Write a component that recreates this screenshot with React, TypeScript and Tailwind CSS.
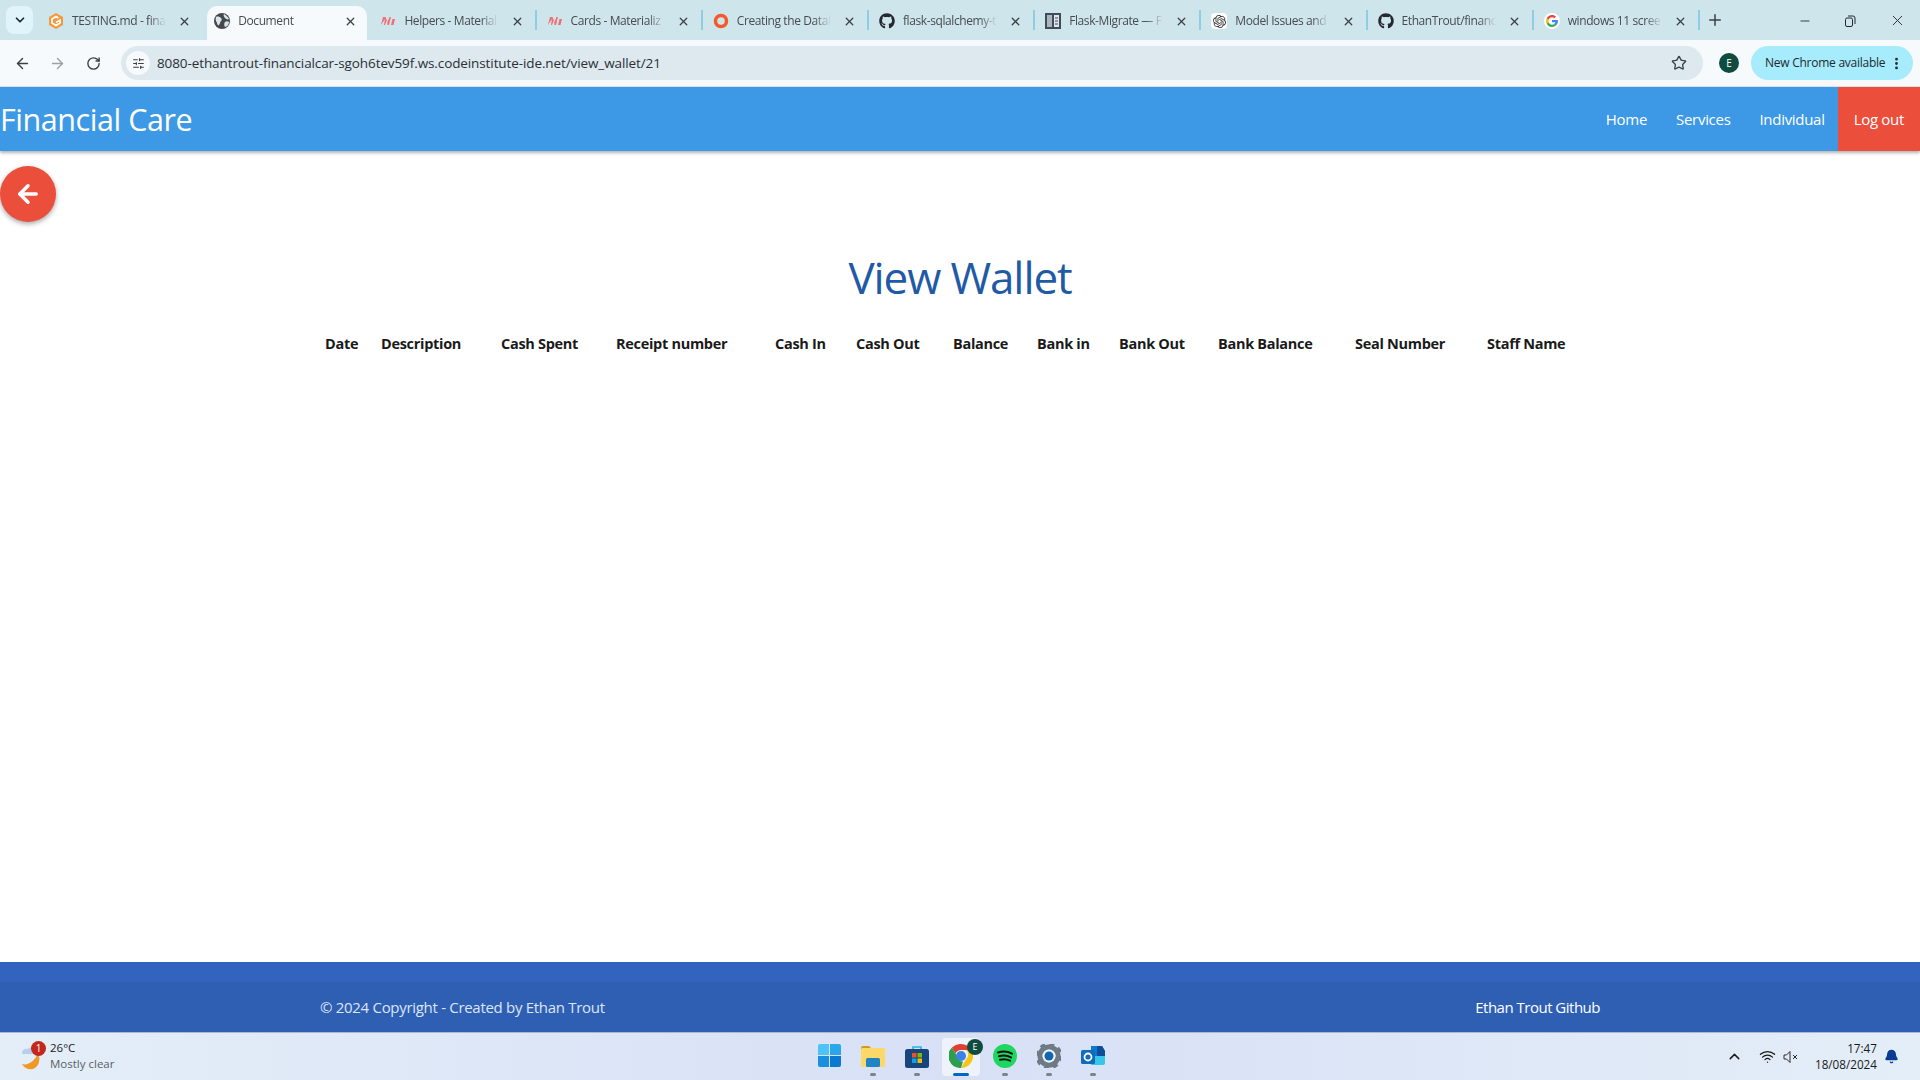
import React from 'react';
import { ArrowLeft, ArrowRight, ChevronDown, Minus, Plus, RotateCw, Star, X, ChevronUp, Wifi, Bell, EllipsisVertical, SlidersHorizontal } from 'lucide-react';
import { FaGithub } from 'react-icons/fa';
import { SiOpenai } from 'react-icons/si';

const Globe = () => (
  <svg width="16" height="16" viewBox="0 0 16 16">
    <circle cx="8" cy="8" r="8" fill="#45494d" />
    <path d="M2 4c2-1 4 0 5 1s1 2 0 3-1 3-2 4-2-1-2-2-2-2-1-6zM10 1c2 1 4 3 5 5-1 1-3 0-4-1s-2-3-1-4zM11 9c1-1 3-1 4 0 0 2-2 5-4 5-1-1-1-4 0-5z" fill="#dbe6ec" />
  </svg>
);
const Gitpod = () => (
  <svg width="16" height="18" viewBox="0 0 16 18">
    <path d="M8 1 15 5v8l-7 4-7-4V5z" fill="#f59a3c" />
    <path d="M10.500 6 8 4.600 4 6.900v4.200L8 13.400l4-2.300V8.200L8 10.400" fill="none" stroke="#fff" strokeWidth="1.700" />
  </svg>
);
const Materialize = () => (
  <svg width="16" height="16" viewBox="0 0 16 16">
    <path d="M1 12 3 4h2.500l2 5 2-5H11l-2 8H7.500L7 7l-2 5H4l1-6zM11 12l1.500-6H15l-1.500 6z" fill="#ee6e73" />
  </svg>
);
const Ring = () => (
  <svg width="16" height="16" viewBox="0 0 16 16">
    <circle cx="8" cy="8" r="5.500" fill="none" stroke="#f4592c" strokeWidth="3.500" />
  </svg>
);
const Book = () => (
  <svg width="16" height="16" viewBox="0 0 16 16">
    <rect width="16" height="16" fill="#3f4d58" />
    <rect x="2" y="2" width="5" height="12" fill="#a9b6bf" />
    <rect x="9" y="2" width="5" height="12" fill="#dfe6ea" />
    <path d="M10 5h3M10 8h3M10 11h3" stroke="#3f4d58" strokeWidth="1.200" />
  </svg>
);
const GoogleG = () => (
  <svg width="16" height="16" viewBox="0 0 48 48">
    <circle cx="24" cy="24" r="24" fill="#fff" />
    <path fill="#EA4335" d="M24 13c3 0 5.300 1.200 7 2.800l5-5C33 7.900 28.900 6 24 6 17 6 11 10 8.100 15.900l5.800 4.500C15.300 16.100 19.300 13 24 13z" />
    <path fill="#4285F4" d="M41.600 24.400c0-1.300-.1-2.300-.3-3.400H24v6.800h10c-.4 2.300-1.800 4.200-3.800 5.500l5.600 4.400c3.500-3.200 5.800-7.900 5.800-13.300z" />
    <path fill="#FBBC05" d="M13.900 27.600c-.4-1.100-.6-2.300-.6-3.600s.2-2.500.6-3.600l-5.800-4.500C6.800 18.400 6 21.100 6 24s.8 5.600 2.100 8.100z" />
    <path fill="#34A853" d="M24 42c4.900 0 8.900-1.600 11.800-4.300l-5.600-4.400c-1.600 1-3.600 1.700-6.200 1.700-4.700 0-8.700-3.100-10.100-7.400l-5.800 4.500C11 37.900 17 42 24 42z" />
  </svg>
);

const tabs = [
  { title: 'TESTING.md - fina', icon: <Gitpod /> },
  { title: 'Document', icon: <Globe />, active: true },
  { title: 'Helpers - Material', icon: <Materialize /> },
  { title: 'Cards - Materializ', icon: <Materialize /> },
  { title: 'Creating the Datal', icon: <Ring /> },
  { title: 'flask-sqlalchemy-t', icon: <FaGithub size={16} color="#24292f" /> },
  { title: 'Flask-Migrate — F', icon: <Book /> },
  { title: 'Model Issues and', icon: <span className="flex h-4 w-4 items-center justify-center rounded-sm bg-white"><SiOpenai size={13} color="#333" /></span> },
  { title: 'EthanTrout/financ', icon: <FaGithub size={16} color="#24292f" /> },
  { title: 'windows 11 scree', icon: <GoogleG /> },
];

const columns = [
  { name: 'Date', width: 'w-[56px]' },
  { name: 'Description', width: 'w-[120px]' },
  { name: 'Cash Spent', width: 'w-[115px]' },
  { name: 'Receipt number', width: 'w-[159px]' },
  { name: 'Cash In', width: 'w-[81px]' },
  { name: 'Cash Out', width: 'w-[97px]' },
  { name: 'Balance', width: 'w-[84px]' },
  { name: 'Bank in', width: 'w-[82px]' },
  { name: 'Bank Out', width: 'w-[99px]' },
  { name: 'Bank Balance', width: 'w-[137px]' },
  { name: 'Seal Number', width: 'w-[132px]' },
  { name: 'Staff Name', width: 'w-[118px]' },
];

const BrowserTab = ({ title, icon, active, hideSep }: { title: string; icon: React.ReactNode; active?: boolean; hideSep?: boolean }) => (
  <div className="relative flex h-[34px] w-[166.2px] shrink-0 items-center pb-[4px] pl-[11px] pr-[12px]">
    {active && <span className="absolute inset-y-0 left-[4px] right-[2px] rounded-t-[10px] bg-[#f6fafc]" />}
    <span className="relative flex w-[16px] shrink-0 items-center justify-center">{icon}</span>
    <span className="relative ml-[8px] w-[94px] overflow-hidden whitespace-nowrap text-[12px] tracking-[-0.4px] text-[#474c50] [mask-image:linear-gradient(90deg,#000_82%,transparent)]">{title}</span>
    <X size={13} strokeWidth={2.4} className="relative ml-auto text-[#3a4145]" />
    {!hideSep && <span className="absolute -right-px top-[4px] h-[20px] w-[2px] bg-[#8fcde3]" />}
  </div>
);

const TaskIcon = ({ children, dot }: { children: React.ReactNode; dot?: boolean }) => (
  <div className="relative mx-[3px] flex h-[38px] w-[38px] items-center justify-center pb-[2px]">
    {children}
    {dot && <span className="absolute bottom-0 h-[3px] w-[6px] rounded-full bg-[#7b828c]" />}
  </div>
);

const Taskbar = () => (
  <div className="flex h-[48px] items-center border-t border-[#a9b9d0] bg-gradient-to-r from-[#e4eef8] via-[#d8e0f6] to-[#e3eef8]">
    <div className="flex w-[829px] shrink-0 items-center pl-[18px]">
      <div className="relative h-[30px] w-[28px]">
        <svg width="26" height="30" viewBox="0 0 26 30" className="mt-[1px]">
          <path d="M4 10c0-3 3-5 6-4 2-2 6-2 8 1v4H4z" fill="#b9cfee" />
          <path d="M20 10c3 6 1 14-5 16-5 1-9-1-11-5 6 2 13-3 16-11z" fill="#f0982a" />
        </svg>
        <span className="absolute right-0 top-[-1px] flex h-[15px] w-[15px] items-center justify-center rounded-full bg-[#c4281c] text-[10px] text-white">1</span>
      </div>
      <div className="ml-[4px] text-[11.500px] leading-[16px]">
        <div className="-mt-[1px] text-[#1a1a1a]">26°C</div>
        <div className="text-[#5b5f66]">Mostly clear</div>
      </div>
    </div>
    <div className="flex flex-1 items-center">
      {/* taskbar apps */}
      <div className="relative -ml-[22px] flex items-center">
        <TaskIcon>
          <div className="grid grid-cols-2 gap-[1px]">
            <span className="h-[11px] w-[11px] rounded-tl-[2px] bg-[#4fc3f7]" />
            <span className="h-[11px] w-[11px] rounded-tr-[2px] bg-[#2ba6ea]" />
            <span className="h-[11px] w-[11px] rounded-bl-[2px] bg-[#1a8fdd]" />
            <span className="h-[11px] w-[11px] rounded-br-[2px] bg-[#0d78d0]" />
          </div>
        </TaskIcon>
        <TaskIcon dot>
          <svg width="26" height="24" viewBox="0 0 26 24">
            <path d="M1 4a2 2 0 0 1 2-2h6l3 3h-11z" fill="#d59a1c" />
            <rect x="1" y="4" width="24" height="19" rx="1.500" fill="#fbd867" />
            <rect x="6" y="14" width="14" height="9" rx="1.500" fill="#1f83c4" />
          </svg>
        </TaskIcon>
        <TaskIcon dot>
          <svg width="24" height="24" viewBox="0 0 24 24">
            <path d="M8 6V3h8v3" fill="none" stroke="#28b4d8" strokeWidth="1.600" />
            <rect y="5" width="24" height="19" rx="2.500" fill="#17467e" />
            <rect x="7" y="9" width="4.500" height="4.500" fill="#f25022" />
            <rect x="12.500" y="9" width="4.500" height="4.500" fill="#7fba00" />
            <rect x="7" y="14.500" width="4.500" height="4.500" fill="#00a4ef" />
            <rect x="12.500" y="14.500" width="4.500" height="4.500" fill="#ffb900" />
          </svg>
        </TaskIcon>
        <div className="relative mx-[3px] flex h-[38px] w-[38px] items-center justify-center rounded-[4px] bg-[#edf2fb] pb-[2px]">
          <svg width="24" height="24" viewBox="0 0 24 24">
            <path d="M12 0a12 12 0 0 1 10.400 6H12a6 6 0 0 0-5.500 3.500L3 3.500A12 12 0 0 1 12 0z" fill="#e0402f" />
            <path d="M22.400 6A12 12 0 0 1 12 24l5.200-9A6 6 0 0 0 17.200 6z" fill="#f5c518" />
            <path d="M12 24A12 12 0 0 1 3 3.500L8 12a6 6 0 0 0 6 5.500z" fill="#2f9e4c" />
            <circle cx="12" cy="12" r="5" fill="#3b82e8" />
          </svg>
          <span className="absolute right-[-3px] top-[1px] flex h-[16px] w-[16px] items-center justify-center rounded-full bg-[#0f4c3f] text-[9px] text-white">E</span>
          <span className="absolute bottom-0 h-[3px] w-[16px] rounded-full bg-[#0067c0]" />
        </div>
        <TaskIcon dot>
          <svg width="24" height="24" viewBox="0 0 24 24">
            <circle cx="12" cy="12" r="12" fill="#1ed760" />
            <path d="M5 8.500c5-1.500 10-1 14 1.200M6 12.200c4-1.100 8.500-.7 12 1.200M7 15.700c3.500-.9 7-.5 10 1" fill="none" stroke="#111" strokeWidth="2" strokeLinecap="round" />
          </svg>
        </TaskIcon>
        <TaskIcon dot>
          <svg width="24" height="24" viewBox="0 0 24 24">
            <circle cx="12" cy="12" r="9" fill="none" stroke="#6e7a85" strokeWidth="5" />
            <circle cx="12" cy="12" r="12" fill="none" stroke="#6e7a85" strokeWidth="3" strokeDasharray="5 4.420" />
            <circle cx="12" cy="12" r="6.500" fill="#f2f5fa" />
            <circle cx="12" cy="12" r="4.500" fill="#1166b4" />
          </svg>
        </TaskIcon>
        <TaskIcon dot>
          <svg width="24" height="24" viewBox="0 0 24 24">
            <path d="M10 2h11l3 5v11a2 2 0 0 1-2 2H10z" fill="#0a78d4" />
            <path d="M16 2h5l3 5v5h-8z" fill="#0f4e96" />
            <path d="M10 12h14v7a2 2 0 0 1-2 2H10z" fill="#37c6e8" />
            <rect y="6" width="14" height="14" rx="1.500" fill="#0f6cbd" />
            <circle cx="7" cy="13" r="3.500" fill="none" stroke="#fff" strokeWidth="1.800" />
          </svg>
        </TaskIcon>
      </div>
    </div>
    <div className="flex items-center pr-[21px] text-[#1a1a1a]">
      <ChevronUp size={17} strokeWidth={2} className="mr-[16px]" />
      <Wifi size={17} strokeWidth={1.800} className="mr-[7px]" />
      <svg width="16" height="14" viewBox="0 0 16 14" fill="none" stroke="#2a2a2a" strokeWidth="1" className="mr-[16px]">
        <path d="M1 5h2.500L7 1.500v11L3.500 9H1zM10 5l4 4M14 5l-4 4" />
      </svg>
      <div className="mr-[7px] -mt-[1px] text-right text-[11.700px] leading-[16px]">
        <div>17:47</div>
        <div>18/08/2024</div>
      </div>
      <Bell size={15} fill="#0a3d91" color="#0a3d91" />
    </div>
  </div>
);

const App = () => {
  return (
    <div className="flex h-screen w-full flex-col overflow-hidden bg-white font-['Open_Sans',sans-serif]">
      {/* browser chrome */}
      <div className="h-[87px] shrink-0 border-b border-[#dfe5e8] bg-[#f6fafc]">
        <div className="flex h-[40px] items-end bg-[#cfe5ec] pl-[6px]">
          <div className="mb-[6px] flex h-[28px] w-[27px] shrink-0 items-center justify-center rounded-[8px] bg-[#e0f5fb]">
            <ChevronDown size={14} strokeWidth={3} className="text-[#1f2a30]" />
          </div>
          <div className="ml-[4px] flex items-start">
            {tabs.map((t, i) => (
              <BrowserTab key={t.title} title={t.title} icon={t.icon} active={t.active} hideSep={i < 2} />
            ))}
          </div>
          <Plus size={18} strokeWidth={2} className="mb-[11px] ml-[7px] text-[#3a4145]" />
          <div className="mb-[11px] ml-auto flex items-center text-[#1f2a30]">
            <Minus size={14} strokeWidth={1.500} className="mr-[32px]" />
            <svg width="12" height="12" viewBox="0 0 12 12" fill="none" stroke="#1f2a30" className="mr-[33px]"><rect x="1.500" y="3" width="7" height="8.500" rx="1.500" /><path d="M4 1h5a2 2 0 0 1 2 2v6" /></svg>
            <X size={17} strokeWidth={1.300} className="mr-[14px]" />
          </div>
        </div>
        <div className="flex h-[46px] items-center pl-[14px]">
          <ArrowLeft size={17} strokeWidth={2} className="text-[#3a4145]" />
          <ArrowRight size={17} strokeWidth={2} className="ml-[18px] text-[#9aa3a8]" />
          <RotateCw size={15} strokeWidth={2.200} className="ml-[20px] text-[#3a4145]" />
          <div className="ml-[20px] flex h-[34px] w-[1582px] items-center rounded-full bg-[#dde9ee] pl-[5px] pr-[16px]">
            <span className="flex h-[24px] w-[24px] items-center justify-center rounded-full bg-[#f6fafc]">
              <SlidersHorizontal size={13} strokeWidth={2} className="text-[#3a4145]" />
            </span>
            <span className="ml-[7px] text-[13.500px] tracking-[-0.1px] text-[#2a3034]">8080-ethantrout-financialcar-sgoh6tev59f.ws.codeinstitute-ide.net/view_wallet/21</span>
            <Star size={16} strokeWidth={2} className="ml-auto text-[#3a4145]" />
          </div>
          <span className="ml-[16px] flex h-[20px] w-[20px] items-center justify-center rounded-full bg-[#0f4c3f] text-[10px] text-white">E</span>
          <div className="ml-[12px] flex h-[34px] w-[162px] items-center rounded-full bg-[#a6ecfd] pl-[14px]">
            <span className="whitespace-nowrap text-[12px] tracking-[-0.25px] text-[#1f2a30]">New Chrome available</span>
            <EllipsisVertical size={15} strokeWidth={2.500} className="ml-auto mr-[9px] text-[#1f2a30]" />
          </div>
        </div>
      </div>

      {/* site nav */}
      <nav className="z-10 flex h-[64px] shrink-0 items-center justify-between bg-[#3d99e5] shadow-[0_2px_3px_rgba(0,0,0,0.3)]">
        <a className="pt-[2px] text-[30.500px] tracking-[-0.45px] text-white">Financial Care</a>
        <ul className="flex h-full items-center text-[15px] tracking-[-0.3px] text-white">
          <li className="pl-[15px] pr-[14px]">Home</li>
          <li className="pl-[15px] pr-[14px]">Services</li>
          <li className="pl-[15px] pr-[13px]">Individual</li>
          <li className="flex h-full items-center bg-[#ec4e3c] pl-[16px] pr-[16px]">Log out</li>
        </ul>
      </nav>

      <main className="flex flex-1 flex-col">
        <button className="mt-[15px] flex h-[56px] w-[56px] items-center justify-center rounded-full bg-[#ec4e3c] shadow-[0_2px_5px_rgba(0,0,0,0.35)]">
          <ArrowLeft size={28} strokeWidth={3} className="text-white" />
        </button>
        <h1 className="mt-[25px] text-center text-[44px] leading-[60px] tracking-[-1.1px] text-[#1f5aa6]">View Wallet</h1>
        <div className="mx-auto mt-[22px] flex w-[1280px] pl-[5px]">
          {columns.map((c) => (
            <div key={c.name} className={`${c.width} shrink-0 whitespace-nowrap text-[14.500px] font-bold leading-[30px] tracking-[-0.3px] text-[#1a1a1a]`}>
              {c.name}
            </div>
          ))}
        </div>
      </main>

      {/* site footer */}
      <footer className="h-[70px] shrink-0 bg-[#2f5fb3]">
        <div className="h-[20px] bg-[#3163bf]" />
        <div className="mx-auto flex h-[50px] w-[1280px] items-center justify-between pt-[1px] text-[15px]">
          <span className="tracking-[-0.3px] text-[#dbe6f5]">© 2024 Copyright - Created by Ethan Trout</span>
          <span className="tracking-[-0.5px] text-white">Ethan Trout Github</span>
        </div>
      </footer>

      <Taskbar />
    </div>
  );
};

export default App;
